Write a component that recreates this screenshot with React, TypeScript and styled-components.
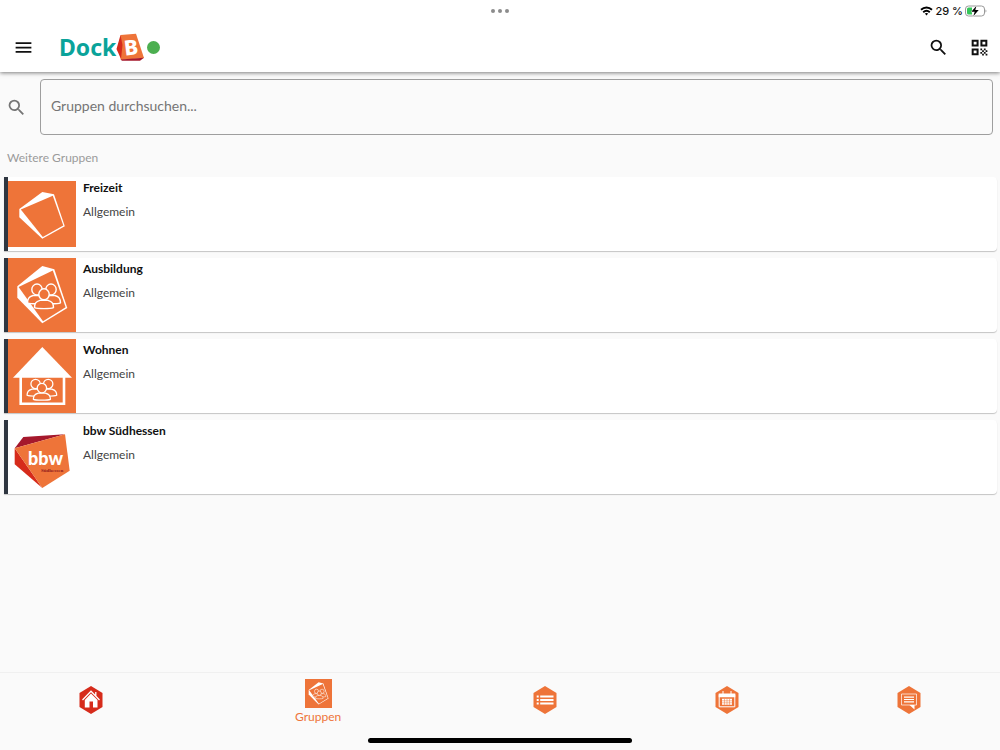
import React from "react";
import styled, { createGlobalStyle } from "styled-components";
import { MdMenu, MdSearch } from "react-icons/md";

const ORANGE = "#ee7439";
const RED = "#d62b1b";

const GlobalStyle = createGlobalStyle`
  *, *::before, *::after { box-sizing: border-box; }
  body {
    margin: 0;
    background: #fafafa;
    color: #111;
    font-family: Lato, "Noto Sans", sans-serif;
  }
`;

const Page = styled.div`
  display: flex;
  flex-direction: column;
  min-height: 100vh;
`;

const Top = styled.header`
  position: relative;
  background: #fff;
  box-shadow: 0 1px 4px rgba(0, 0, 0, 0.5);
`;

const StatusBar = styled.div`
  display: grid;
  grid-template-columns: 1fr auto 1fr;
  align-items: center;
  height: 22px;
  padding: 0 13px;
`;

const Dots = styled.div`
  grid-column: 2;
  display: flex;
  gap: 3px;
  span {
    width: 4px;
    height: 4px;
    border-radius: 50%;
    background: #8c8c8c;
  }
`;

const Status = styled.div`
  display: flex;
  justify-content: flex-end;
  align-items: center;
  gap: 2px;
  font: 500 11px/14px Inter, sans-serif;
`;

const Toolbar = styled.div`
  display: flex;
  align-items: center;
  height: 50px;
  padding: 0 10px 0 13px;
`;

const IconButton = styled.button`
  display: flex;
  padding: 0;
  border: 0;
  background: none;
  color: #111;
  cursor: pointer;
`;

const Brand = styled.a`
  display: flex;
  align-items: center;
  margin-left: 25px;
  color: #0aa39a;
  font: 700 23px/28px "Noto Sans", sans-serif;
  text-decoration: none;
`;

const Online = styled.span`
  width: 13px;
  height: 13px;
  margin-left: 3px;
  border-radius: 50%;
  background: #4caf50;
`;

const Actions = styled.div`
  display: flex;
  gap: 20px;
  margin-left: auto;
`;

const Main = styled.main`
  flex: 1;
  padding: 7px 3px 0 4px;
`;

const SearchRow = styled.label`
  display: flex;
  align-items: center;
  gap: 13px;
  padding: 0 4px 0 2px;
  color: #757575;
`;

const SearchInput = styled.input`
  flex: 1;
  min-width: 0;
  height: 56px;
  padding: 0 10px 3px;
  border: 1px solid #9e9e9e;
  border-radius: 4px;
  background: transparent;
  color: #111;
  font: 14px/20px Lato, sans-serif;
  &::placeholder {
    color: #757575;
    opacity: 1;
  }
`;

const SectionTitle = styled.h2`
  margin: 14px 3px 10px;
  color: #9a9a9a;
  font-size: 12px;
  line-height: 18px;
  font-weight: 400;
`;

const GroupList = styled.ul`
  display: flex;
  flex-direction: column;
  gap: 7px;
  margin: 0;
  padding: 0;
  list-style: none;
`;

const GroupCard = styled.li`
  display: flex;
  gap: 7px;
  height: 74px;
  border-left: 4px solid #2f3640;
  border-radius: 0 4px 4px 0;
  background: #fff;
  box-shadow: 0 1px 1px rgba(0, 0, 0, 0.22);
`;

const GroupText = styled.div`
  padding-top: 2px;
`;

const GroupName = styled.h3`
  margin: 0 0 6px;
  font-size: 12px;
  line-height: 18px;
  font-weight: 700;
`;

const GroupInfo = styled.p`
  margin: 0;
  color: #444;
  font-size: 12px;
  line-height: 18px;
`;

const BottomNav = styled.nav`
  display: flex;
  height: 66px;
  border-top: 1px solid #f0f0f0;
`;

const Tab = styled.button<{ $active?: boolean }>`
  display: flex;
  flex: ${(p) => (p.$active ? 1.5 : 1)} 1 0;
  flex-direction: column;
  align-items: center;
  padding: ${(p) => (p.$active ? 6 : 13)}px 0 0;
  border: 0;
  background: none;
  color: ${ORANGE};
  font: 12px/18px Lato, sans-serif;
  cursor: pointer;
`;

const HomeBar = styled.div`
  align-self: center;
  width: 264px;
  height: 5px;
  margin-bottom: 7px;
  border-radius: 3px;
  background: #000;
`;

const Person = () => (
  <>
    <path d="M-9.500 13.300c.2-4.300 1.200-5.800 5.500-7.300h8c4.300 1.500 5.300 3 5.500 7.300-3 1.300-16 1.300-19 0z" />
    <ellipse rx="5.200" ry="5.500" />
  </>
);

const People = () => (
  <g fill={ORANGE} stroke="#fff" strokeWidth="1.400" strokeLinejoin="round">
    <g transform="translate(29 31.500)"><Person /></g>
    <g transform="translate(43 31.500)"><Person /></g>
    <g transform="translate(36 36.300)"><Person /></g>
  </g>
);

const GroupFrame = () => (
  <>
    <path fill="#fff" d="M9.300 28.300 34.300 8l12 3.300L59.300 50l-25 15.300-25-25.600z" />
    <path fill={ORANGE} d="M10.600 29 44.800 12.500 57.600 49.300 35 63.200z" />
    <People />
  </>
);

const LeisureImage = () => (
  <svg width="68" height="74" viewBox="0 0 68 74" aria-hidden="true">
    <path fill={ORANGE} d="M0 4h68v66H0z" />
    <path fill="#fff" d="M11.300 32 34.300 15l11.700 2.300 10.800 32-22.500 12.500-23-21.500z" />
    <path fill={ORANGE} d="M12.800 32.600 44.800 18.800 55.300 48.600 34.800 60z" />
  </svg>
);

const TrainingImage = () => (
  <svg width="68" height="74" viewBox="0 0 68 74" aria-hidden="true">
    <path fill={ORANGE} d="M0 0h68v74H0z" />
    <GroupFrame />
  </svg>
);

const LivingImage = () => (
  <svg width="68" height="74" viewBox="0 0 68 74" aria-hidden="true">
    <path fill={ORANGE} d="M0 0h68v74H0z" />
    <path fill="#fff" d="M34.300 8 64 38.700H5z" />
    <path fill="none" stroke="#fff" strokeWidth="2.600" d="M12.700 38v26.700H56V38" />
    <g transform="translate(1.500 18.200) scale(.9 .85)">
      <People />
    </g>
  </svg>
);

const BbwImage = () => (
  <svg width="68" height="74" viewBox="0 0 68 74" aria-hidden="true">
    <path fill="#a5182c" d="M6.700 28.300 15.300 17 57 14.300z" />
    <path fill={RED} d="M6.700 28.300v16L34.300 68z" />
    <path fill={ORANGE} d="M6.700 28.300 57 14.300l4.700 36.400L34.300 68z" />
    <text x="20" y="45" fill="#fff" fontFamily="Lato" fontWeight="900" fontSize="18">bbw</text>
    <text x="33" y="52" fill="#8e1a1c" fontFamily="Liberation Serif" fontWeight="700" fontSize="5">Südhessen</text>
  </svg>
);

const BrandMark = () => (
  <svg width="28" height="28" viewBox="0 0 28 28" aria-hidden="true">
    <path fill={ORANGE} d="M4.500 2 20 .7 28 25 5 27 2.500 16z" />
    <path fill={RED} d="M.5 16 4.500 2l2 10L5 26z" />
    <path fill="#a5182c" d="M4.500 26.500 28 24.800 24 27.700H6z" />
    <text x="8" y="22" fill="#fff" fontFamily="Noto Sans" fontWeight="800" fontSize="21" transform="rotate(-7 14 14)">B</text>
  </svg>
);

const QrIcon = () => (
  <svg width="21" height="21" viewBox="0 0 24 24" aria-hidden="true">
    <path fill="none" stroke="currentColor" strokeWidth="2.300" d="M4.200 4.200h5.600v5.600H4.200zM14.200 4.200h5.600v5.600h-5.600zM4.200 14.200h5.600v5.600H4.200z" />
    <path fill="currentColor" d="M13 13h2v2h-2zM17 13h2v2h-2zM15 15h2v2h-2zM19 15h2v2h-2zM13 17h2v2h-2zM17 17h2v2h-2zM15 19h2v2h-2zM19 19h2v2h-2z" />
  </svg>
);

const Wifi = () => (
  <svg width="13" height="10" viewBox="0 0 13 10" aria-hidden="true">
    <g fill="none" stroke="#000" strokeWidth="1.900">
      <path d="M1 3.800c3.200-3 7.800-3 11 0" />
      <path d="M3.200 6.200c2-1.800 4.600-1.800 6.600 0" />
    </g>
    <path d="M4.800 7.600c1-.9 2.400-.9 3.400 0L6.500 9.400z" />
  </svg>
);

const Battery = () => (
  <svg width="22" height="12" viewBox="0 0 22 12" aria-hidden="true">
    <rect x=".5" y="1" width="19" height="10" rx="3" fill="#fff" stroke="#999" />
    <path fill="#34c759" d="M3.500 2.500H7v7H3.500A1.500 1.500 0 0 1 2 8V4a1.500 1.500 0 0 1 1.500-1.500z" />
    <path fill="#999" d="M20.500 4.500c1.200.5 1.200 2.500 0 3z" />
    <path stroke="#fff" strokeWidth="1" paintOrder="stroke" d="M11.500.8 6.300 6.800h3.400L8.300 11.300l5.400-6.200h-3.400z" />
  </svg>
);

const Hexagon = ({ fill, children }: { fill: string; children: React.ReactNode }) => (
  <svg width="24" height="28" viewBox="0 0 24 28" aria-hidden="true">
    <path fill={fill} d="M12 0 23.500 7v14L12 28 .5 21V7z" />
    {children}
  </svg>
);

const HomeIcon = () => (
  <Hexagon fill={RED}>
    <path fill="none" stroke="#fff" strokeWidth="1.300" d="M3.500 14 12 5.300l8.500 8.700M16.800 10V6" />
    <path fill="#fff" d="M12 7.500 18.500 14v7.500H14V15.500h-3.500v6H5.800V14z" />
  </Hexagon>
);

const ListIcon = () => (
  <Hexagon fill={ORANGE}>
    <path stroke="#fff" strokeWidth="1.900" d="M3.700 10.500h2M7.200 10.500h13.300M3.700 14h2M7.200 14h13.300M3.700 17.500h2M7.200 17.500h13.300" />
  </Hexagon>
);

const CalendarIcon = () => (
  <Hexagon fill={ORANGE}>
    <path fill="none" stroke="#fff" d="M4.200 8.500v12.300h15.600V8.500M8 5v3M16 5v3" />
    <path fill="#fff" d="M3.700 7.500h16.600v3.700H3.700zM7 12.800h10v6H7z" />
    <path fill="none" stroke={ORANGE} strokeWidth=".5" d="M7 14.800h10M7 16.800h10M9.500 12.800v6M12 12.800v6M14.500 12.800v6" />
  </Hexagon>
);

const MessageIcon = () => (
  <Hexagon fill={ORANGE}>
    <path fill="none" stroke="#fff" strokeOpacity=".7" d="M4.500 8h15v11h-15z" />
    <path stroke="#fff" strokeWidth="1.200" d="M7 11.200h10M7 13.500h10M7 15.800h10" />
    <path fill="#fff" d="M12.500 19h5v4.500z" />
  </Hexagon>
);

const GroupsIcon = () => (
  <svg width="27" height="29" viewBox="0 0 68 74" preserveAspectRatio="none" aria-hidden="true">
    <path fill={ORANGE} d="M0 0h68v74H0z" />
    <GroupFrame />
  </svg>
);

const groups = [
  { name: "Freizeit", Image: LeisureImage },
  { name: "Ausbildung", Image: TrainingImage },
  { name: "Wohnen", Image: LivingImage },
  { name: "bbw Südhessen", Image: BbwImage },
];

export default function App() {
  return (
    <Page>
      <GlobalStyle />
      <Top>
        <StatusBar>
          <Dots><span /><span /><span /></Dots>
          <Status><Wifi />29 %<Battery /></Status>
        </StatusBar>
        <Toolbar>
          <IconButton aria-label="Menü"><MdMenu size={21} /></IconButton>
          <Brand href="#" aria-label="DockB">Dock<BrandMark /></Brand>
          <Online />
          <Actions>
            <IconButton aria-label="Suchen"><MdSearch size={21} /></IconButton>
            <IconButton aria-label="QR-Code"><QrIcon /></IconButton>
          </Actions>
        </Toolbar>
      </Top>
      <Main>
        <SearchRow>
          <MdSearch size={21} aria-hidden="true" />
          <SearchInput type="text" aria-label="Gruppen durchsuchen" placeholder="Gruppen durchsuchen..." />
        </SearchRow>
        <SectionTitle>Weitere Gruppen</SectionTitle>
        <GroupList>
          {groups.map(({ name, Image }) => (
            <GroupCard key={name}>
              <Image />
              <GroupText>
                <GroupName>{name}</GroupName>
                <GroupInfo>Allgemein</GroupInfo>
              </GroupText>
            </GroupCard>
          ))}
        </GroupList>
      </Main>
      <BottomNav>
        <Tab aria-label="Start"><HomeIcon /></Tab>
        <Tab $active><GroupsIcon />Gruppen</Tab>
        <Tab aria-label="Liste"><ListIcon /></Tab>
        <Tab aria-label="Kalender"><CalendarIcon /></Tab>
        <Tab aria-label="Nachrichten"><MessageIcon /></Tab>
      </BottomNav>
      <HomeBar />
    </Page>
  );
}
